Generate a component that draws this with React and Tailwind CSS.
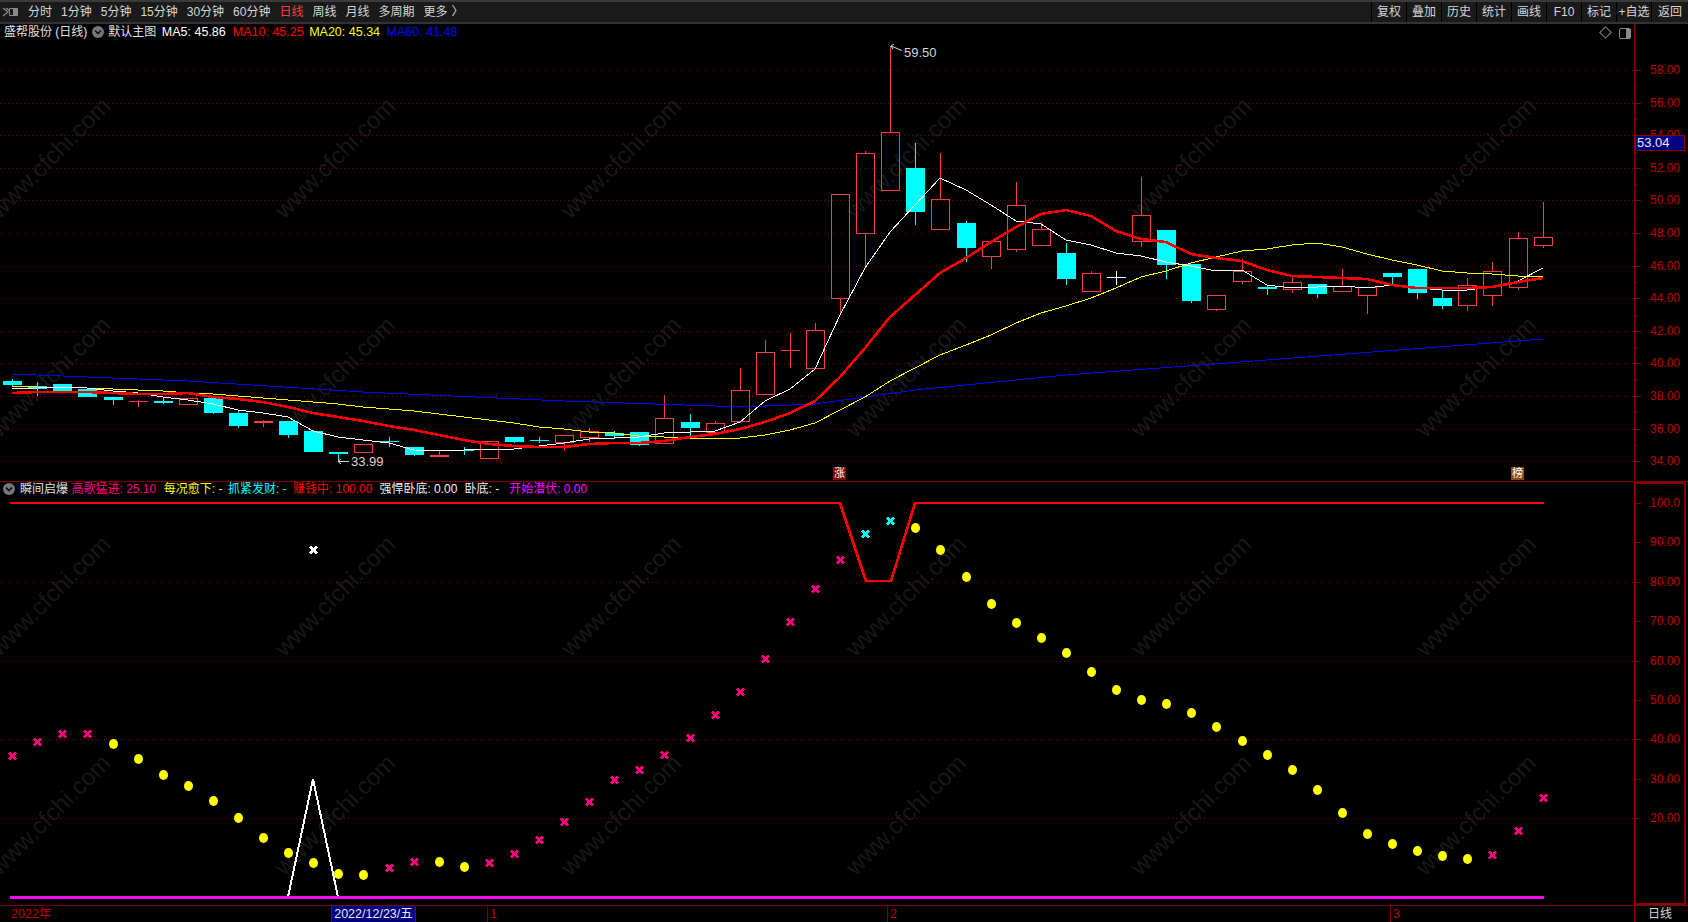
const STEP = 25.09;
const X0 = 12.15;
const cx = (i) => Math.round(X0 + STEP * i);

// hi, top, bottom, lo, kind (r = hollow red, c = cyan, t = thin red, w = white cross)
const CANDLES = [
  [379, 381, 385, 386, "c"], [382, 386, 389, 396, "c"], [384, 384, 391, 391, "c"], [388, 389, 397, 397, "c"],
  [397, 397, 400, 405, "c"], [400, 401, 402, 407, "t"], [398, 401, 403, 404, "c"], [398, 398, 404, 404, "r"],
  [398, 398, 413, 414, "c"], [411, 413, 426, 428, "c"], [420, 421, 423, 427, "t"], [421, 421, 435, 438, "c"],
  [430, 431, 452, 452, "c"], [452, 452, 454, 462, "c"], [444, 444, 452, 452, "r"], [437, 441, 442, 447, "c"],
  [447, 447, 455, 456, "c"], [451, 455, 457, 457, "t"], [447, 450, 451, 455, "c"], [441, 441, 458, 458, "r"],
  [437, 437, 442, 443, "c"], [437, 440, 441, 443, "c"], [435, 435, 442, 451, "r"], [428, 431, 437, 442, "r"],
  [431, 433, 436, 439, "c"], [432, 432, 445, 446, "c"], [395, 418, 443, 443, "r"], [414, 422, 428, 436, "c"],
  [421, 423, 432, 432, "r"], [368, 390, 421, 423, "r"], [340, 352, 394, 394, "r"], [333, 350, 351, 368, "t"],
  [323, 330, 368, 368, "r"], [194, 194, 298, 315, "r"], [151, 153, 233, 267, "r"], [46, 132, 190, 190, "r"],
  [143, 168, 212, 225, "c"], [153, 199, 229, 229, "r"], [221, 223, 248, 262, "c"], [241, 241, 256, 269, "r"],
  [182, 205, 249, 252, "r"], [222, 229, 245, 245, "r"], [243, 253, 279, 285, "c"], [271, 273, 291, 291, "r"],
  [271, 277, 278, 285, "w"], [177, 215, 241, 247, "r"], [230, 230, 265, 279, "c"], [264, 264, 301, 303, "c"],
  [295, 295, 309, 311, "r"], [259, 271, 281, 284, "r"], [285, 287, 289, 295, "c"], [277, 282, 289, 293, "r"],
  [284, 284, 294, 298, "c"], [269, 286, 291, 291, "r"], [287, 287, 295, 314, "r"], [273, 273, 277, 285, "c"],
  [269, 269, 293, 299, "c"], [291, 298, 306, 309, "c"], [278, 285, 305, 311, "r"], [262, 271, 295, 306, "r"],
  [232, 238, 287, 290, "r"], [202, 237, 245, 248, "r"],
];

const MA5 = [388, 388, 387, 388, 391, 393, 397, 400, 404, 410, 413, 417, 431, 437, 440, 443, 450, 450, 450, 449, 449, 446, 443, 439, 438, 437, 433, 432, 431, 422, 401, 389, 369, 315, 268, 232, 205, 178, 190, 205, 221, 224, 240, 245, 253, 256, 262, 266, 271, 270, 285, 288, 287, 286, 288, 285, 288, 290, 290, 287, 281, 268];
const MA10 = [393, 392, 392, 392, 393, 394, 394, 393, 397, 399, 402, 407, 413, 417, 421, 426, 430, 435, 440, 444, 446, 447, 447, 444, 443, 443, 441, 437, 434, 429, 422, 413, 401, 377, 348, 317, 295, 273, 258, 242, 227, 214, 210, 216, 231, 239, 242, 254, 258, 261, 270, 276, 277, 278, 279, 285, 288, 288, 288, 287, 282, 278];
const MA20 = [386, 387, 387, 388, 389, 390, 391, 393, 394, 396, 398, 400, 402, 404, 407, 409, 411, 414, 417, 420, 423, 427, 429, 432, 433, 436, 437, 438, 439, 438, 435, 430, 423, 410, 397, 381, 368, 355, 345, 335, 323, 313, 306, 298, 288, 277, 271, 263, 257, 251, 249, 245, 243, 247, 254, 260, 265, 271, 273, 274, 276, 276];
const MA60 = [[0, 374], [7, 381], [14, 392], [22, 401], [28, 406], [30, 406], [32, 404], [34, 397], [36, 390], [42, 375], [50, 360], [61, 339]];

// x = pink cross, o = yellow dot, c = cyan cross
const SIGNALS = [
  [756, "x"], [742, "x"], [734, "x"], [734, "x"], [744, "o"], [759, "o"], [775, "o"], [786, "o"], [801, "o"], [818, "o"],
  [838, "o"], [853, "o"], [863, "o"], [874, "o"], [875, "o"], [868, "x"], [862, "x"], [862, "o"], [867, "o"], [863, "x"],
  [854, "x"], [840, "x"], [822, "x"], [802, "x"], [780, "x"], [770, "x"], [755, "x"], [738, "x"], [715, "x"], [692, "x"],
  [659, "x"], [622, "x"], [589, "x"], [560, "x"], [534, "c"], [521, "c"], [528, "o"], [550, "o"], [577, "o"], [604, "o"],
  [623, "o"], [638, "o"], [653, "o"], [672, "o"], [690, "o"], [700, "o"], [704, "o"], [713, "o"], [727, "o"], [741, "o"],
  [755, "o"], [770, "o"], [790, "o"], [813, "o"], [834, "o"], [844, "o"], [851, "o"], [856, "o"], [859, "o"], [855, "x"],
  [831, "x"], [798, "x"],
];

const WATERMARKS = [];
for (const y of [158, 377, 596, 815]) {
  for (const x of [50, 335, 621, 906, 1191, 1476]) WATERMARKS.push([x, y]);
}

const PRICES = [58, 56, 54, 52, 50, 48, 46, 44, 42, 40, 38, 36, 34];
const priceY = (p) => Math.round(70 + (58 - p) * 16.3);
const INDICATORS = [100, 90, 80, 70, 60, 50, 40, 30, 20];
const indY = (v) => Math.round(503 + (100 - v) * 3.94);

const MENU = ["分时", "1分钟", "5分钟", "15分钟", "30分钟", "60分钟", "日线", "周线", "月线", "多周期", "更多"];
const TOOLS = ["复权", "叠加", "历史", "统计", "画线", "F10", "标记", "+自选", "返回"];

const pts = (arr) => arr.map((y, i) => `${cx(i)},${y}`).join(" ");

function Watermarks() {
  return WATERMARKS.map(([x, y]) => (
    <text key={`${x}-${y}`} x={x} y={y + 8} textAnchor="middle" fontSize="24" fill="#181818" transform={`rotate(-45 ${x} ${y})`}>
      www.cfchi.com
    </text>
  ));
}

function Candle({ c, i }) {
  const [hi, top, bot, lo, kind] = c;
  const x = cx(i);
  const color = kind === "c" ? "#00ffff" : kind === "w" ? "#ffffff" : "#ff3c3c";
  const wick = (
    <>
      <line x1={x + 0.5} x2={x + 0.5} y1={hi} y2={top} stroke={color} />
      <line x1={x + 0.5} x2={x + 0.5} y1={bot} y2={lo} stroke={color} />
    </>
  );
  if (kind === "r") {
    return (
      <g>
        {wick}
        <rect x={x - 8.5} y={top + 0.5} width={18} height={bot - top} fill="none" stroke={color} />
      </g>
    );
  }
  return (
    <g>
      {wick}
      <rect x={x - 9} y={top} width={19} height={bot - top} fill={color} />
    </g>
  );
}

function Signal({ s, i }) {
  const [y, kind] = s;
  const x = cx(i);
  if (kind === "o") {
    return <ellipse cx={x + 0.5} cy={y} rx={4.5} ry={5} fill="#ffff00" shapeRendering="geometricPrecision" />;
  }
  const color = kind === "c" ? "#00ffff" : "#ff0080";
  return (
    <path d={`M${x - 3} ${y - 3.5}L${x + 4} ${y + 3.5}M${x + 4} ${y - 3.5}L${x - 3} ${y + 3.5}`} stroke={color} strokeWidth="2.6" fill="none" />
  );
}

function GridLines({ ys }) {
  return ys.map((y) => (
    <line key={y} x1="0" x2="1634" y1={y + 0.5} y2={y + 0.5} stroke="#800000" strokeDasharray="1 3" />
  ));
}

function Collapse() {
  return (
    <svg width="12" height="12" viewBox="0 0 12 12" className="shrink-0">
      <circle cx="6" cy="6" r="6" fill="#777" />
      <path d="M3 4.5L6 7.5L9 4.5" stroke="#111" strokeWidth="1.6" fill="none" />
    </svg>
  );
}

function PriceChart() {
  return (
    <svg width="1634" height="457" viewBox="0 24 1634 457" className="block">
      <Watermarks />
      <GridLines ys={PRICES.map(priceY)} />
      <g shapeRendering="crispEdges">
        {CANDLES.map((c, i) => <Candle key={i} c={c} i={i} />)}
        <polyline points={MA60.map(([i, y]) => `${cx(i)},${y}`).join(" ")} fill="none" stroke="#0000ff" strokeWidth="1" />
        <polyline points={pts(MA20)} fill="none" stroke="#ffff00" strokeWidth="1" />
        <polyline points={pts(MA5)} fill="none" stroke="#ffffff" strokeWidth="1" />
        <polyline points={pts(MA10)} fill="none" stroke="#ff0000" strokeWidth="2.6" />
      </g>
      <path d="M891 46L902 50.5M891 46L894 44M891 46L893 49" stroke="#d8d8d8" fill="none" />
      <text x="904" y="56.5" fontSize="13" fill="#d4d4d4">59.50</text>
      <path d="M338 461.5H349M338 461.5L341 459M338 461.5L341 464" stroke="#d8d8d8" fill="none" />
      <text x="351" y="466" fontSize="13" fill="#d4d4d4">33.99</text>
    </svg>
  );
}

function IndicatorChart() {
  return (
    <svg width="1634" height="423" viewBox="0 482 1634 423" className="block">
      <Watermarks />
      <GridLines ys={[80, 60, 40, 20].map(indY)} />
      <g shapeRendering="crispEdges">
        <polyline points={`10,503 ${cx(33)},503 ${cx(34) + 1},581 ${cx(35) + 1},581 ${cx(36)},503 1544,503`} fill="none" stroke="#ff0000" strokeWidth="2.6" />
        <polyline points={`${cx(11)},897 ${cx(12)},779 ${cx(13)},897`} fill="none" stroke="#ffffff" strokeWidth="2" />
        <line x1="10" x2="1544" y1="897.5" y2="897.5" stroke="#ff00ff" strokeWidth="3" />
        {SIGNALS.map((s, i) => <Signal key={i} s={s} i={i} />)}
        <path d={`M${cx(12) - 3} 546.5L${cx(12) + 4} 553.5M${cx(12) + 4} 546.5L${cx(12) - 3} 553.5`} stroke="#ffffff" strokeWidth="2.6" fill="none" />
      </g>
    </svg>
  );
}

function PriceAxis() {
  return (
    <svg width="54" height="457" viewBox="1634 24 54 457" className="block">
      <g shapeRendering="crispEdges" stroke="#8a0000">
        <line x1="1634.5" x2="1634.5" y1="24" y2="481" />
        {PRICES.map((p) => <line key={p} x1="1634" x2="1641" y1={priceY(p) + 0.5} y2={priceY(p) + 0.5} />)}
        {PRICES.slice(0, -1).map((p) => <line key={p} x1="1634" x2="1637" y1={priceY(p - 1) + 0.5} y2={priceY(p - 1) + 0.5} />)}
      </g>
      {PRICES.map((p) => (
        <text key={p} x="1650" y={priceY(p) + 4} fontSize="12" fill="#c00000">{p}.00</text>
      ))}
    </svg>
  );
}

function IndicatorAxis() {
  return (
    <svg width="54" height="423" viewBox="1634 482 54 423" className="block">
      <g shapeRendering="crispEdges" stroke="#8a0000">
        <rect x="1635" y="483" width="50" height="421" fill="none" strokeWidth="2" />
        {INDICATORS.map((v) => <line key={v} x1="1636" x2="1641" y1={indY(v) + 0.5} y2={indY(v) + 0.5} />)}
      </g>
      {INDICATORS.map((v) => (
        <text key={v} x="1650" y={indY(v) + 4} fontSize="12" fill="#c00000">{v === 100 ? "100.0" : `${v}.00`}</text>
      ))}
    </svg>
  );
}

export default function App() {
  return (
    <div className="flex h-[922px] w-[1688px] flex-col overflow-hidden bg-black font-['Liberation_Sans','Noto_Sans_CJK_SC',sans-serif] text-xs text-[#d6d6d6]">
      {/* top toolbar */}
      <div className="flex h-[24px] shrink-0 items-center border-t-2 border-b-2 border-t-[#3a3a3a] border-b-[#333] bg-[#1a1a1a]">
        <svg width="17" height="12" viewBox="0 0 17 12" className="ml-[2px] shrink-0">
          <path d="M1 2L6 6L1 10M4 2L8 5" stroke="#8a8a8a" strokeWidth="1.2" fill="none" />
          <rect x="7" y="2" width="9" height="8" rx="1" fill="#8a8a8a" />
          <rect x="8" y="3" width="3" height="6" fill="#1a1a1a" />
        </svg>
        <div className="ml-[9px] flex gap-[9px]">
          {MENU.map((m) => (
            <span key={m} className={m === "日线" ? "text-[#ff3c3c]" : ""}>{m}</span>
          ))}
          <span className="-ml-[5px]">〉</span>
        </div>
        <div className="ml-auto flex h-full">
          {TOOLS.map((t, i) => (
            <span key={t} className={`flex h-full items-center justify-center border-l border-l-black ${i === 8 ? "w-[37px]" : "w-[35px]"}`}>{t}</span>
          ))}
        </div>
      </div>

      {/* price pane */}
      <div className="relative flex h-[457px] shrink-0">
        <PriceChart />
        <PriceAxis />
        <div className="absolute top-[1px] left-[4px] flex h-[14px] items-center whitespace-nowrap text-[12.5px]">
          <span className="text-xs text-[#e0e0e0]">盛帮股份 (日线)</span>
          <span className="mr-[4px] ml-[5px]"><Collapse /></span>
          <span className="text-xs text-[#e0e0e0]">默认主图</span>
          <span className="ml-[5.5px] text-white">MA5: 45.86</span>
          <span className="ml-[7px] text-[#ff0000]">MA10: 45.25</span>
          <span className="ml-[5.5px] text-[#ffff00]">MA20: 45.34</span>
          <span className="ml-[6.5px] text-[#0000ff]">MA60: 41.48</span>
        </div>
        <div className="absolute top-[4px] left-[1601px] h-[9px] w-[9px] rotate-45 border border-[#8a8a8a]" />
        <div className="absolute top-[4px] left-[1619px] flex h-[11px] w-[12px] justify-end rounded-[2px] border border-[#8a8a8a]">
          <div className="h-full w-[4px] bg-[#8a8a8a]" />
        </div>
        <div className="absolute top-[111px] left-[1635px] flex h-[16px] w-[50px] items-center border border-[#8a0000] bg-[#000080] pl-[1px] text-[13px] text-[#e8e8e8]">53.04</div>
        <span className="absolute top-[443px] left-[833px] flex h-[13px] w-[13px] items-center justify-center bg-[#8b0000] text-[11px] leading-none text-white">涨</span>
        <span className="absolute top-[443px] left-[1511px] flex h-[13px] w-[13px] items-center justify-center bg-[#8b4a10] text-[11px] leading-none text-white">榜</span>
      </div>

      {/* indicator pane */}
      <div className="relative flex h-[424px] shrink-0 border-t border-t-[#7a0000]">
        <IndicatorChart />
        <IndicatorAxis />
        <div className="absolute top-0 left-[3px] flex h-[14px] items-center whitespace-nowrap text-xs">
          <Collapse />
          <span className="ml-[5px] text-[#e0e0e0]">瞬间启爆</span>
          <span className="ml-[3.5px] text-[#ff0080]">高歌猛进: 25.10</span>
          <span className="ml-[7.5px] text-[#ffff00]">每况愈下: -</span>
          <span className="ml-[5.5px] text-[#00ffff]">抓紧发财: -</span>
          <span className="ml-[6.5px] text-[#ff0000]">赚钱中: 100.00</span>
          <span className="ml-[7px] text-[#f0f0f0]">强悍卧底: 0.00</span>
          <span className="ml-[7px] text-[#f0f0f0]">卧底: -</span>
          <span className="ml-[10px] text-[#ff00ff]">开始潜伏: 0.00</span>
        </div>
      </div>

      {/* date axis */}
      <div className="relative flex h-[17px] shrink-0 items-center border-t border-t-[#7a0000] text-[12.5px]">
        <span className="ml-[11px] text-[#c00000]">2022年</span>
        <span className="absolute top-0 left-[331px] flex h-full w-[85px] items-center justify-center border-x border-x-[#8a0000] bg-[#000080] text-[#e8e8e8]">2022/12/23/五</span>
        <span className="absolute top-0 left-[487px] h-full border-l border-l-[#7a0000] pl-[2px] text-[#c00000]">1</span>
        <span className="absolute top-0 left-[887px] h-full border-l border-l-[#7a0000] pl-[2px] text-[#c00000]">2</span>
        <span className="absolute top-0 left-[1390px] h-full border-l border-l-[#7a0000] pl-[2px] text-[#c00000]">3</span>
        <span className="absolute top-0 left-[1634px] flex h-full w-[54px] items-center border-l border-l-[#8a0000] pl-[13px] text-xs text-[#d6d6d6]">日线</span>
      </div>
    </div>
  );
}
